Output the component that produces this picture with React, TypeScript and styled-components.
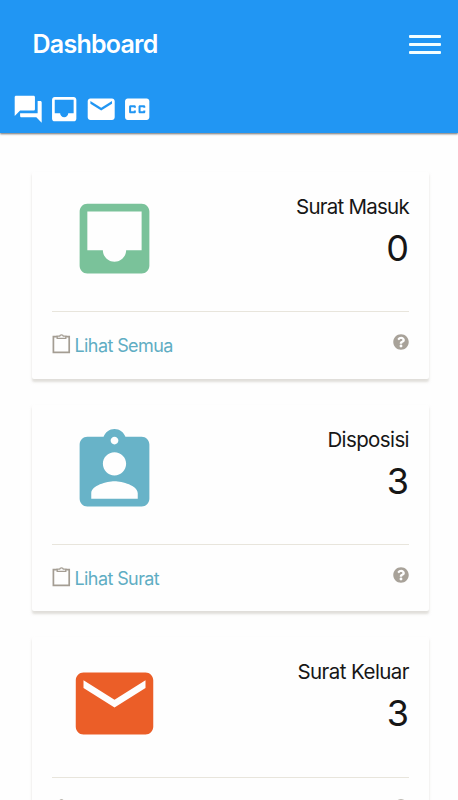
import React from "react";
import styled, { createGlobalStyle } from "styled-components";
import { FaQuestionCircle } from "react-icons/fa";

const GlobalStyle = createGlobalStyle`
  * { box-sizing: border-box; }
  html, body { margin: 0; background: #fefefe; }
  body { font-family: Inter, "Open Sans", sans-serif; }
`;

const icons = {
  forum:
    "M21 6h-2v9H6v2c0 .55.45 1 1 1h11l4 4V7c0-.55-.45-1-1-1zm-4 6V3c0-.55-.45-1-1-1H3c-.55 0-1 .45-1 1v14l4-4h10c.55 0 1-.45 1-1z",
  inbox:
    "M19 3H4.99c-1.11 0-1.98.89-1.98 2L3 19c0 1.1.88 2 1.99 2H19c1.1 0 2-.9 2-2V5c0-1.11-.9-2-2-2zm0 12h-4c0 1.66-1.35 3-3 3s-3-1.34-3-3H4.99V5H19v10z",
  mail:
    "M20 4H4c-1.1 0-1.99.9-1.99 2L2 18c0 1.1.9 2 2 2h16c1.1 0 2-.9 2-2V6c0-1.1-.9-2-2-2zm0 4l-8 5-8-5V6l8 5 8-5v2z",
  caption:
    "M19 4H5c-1.11 0-2 .9-2 2v12c0 1.1.89 2 2 2h14c1.1 0 2-.9 2-2V6c0-1.1-.9-2-2-2zm-8 7H9.5v-.5h-2v3h2V13H11v1c0 .55-.45 1-1 1H7c-.55 0-1-.45-1-1v-4c0-.55.45-1 1-1h3c.55 0 1 .45 1 1v1zm7 0h-1.5v-.5h-2v3h2V13H18v1c0 .55-.45 1-1 1h-3c-.55 0-1-.45-1-1v-4c0-.55.45-1 1-1h3c.55 0 1 .45 1 1v1z",
  person:
    "M19 3h-4.18C14.4 1.84 13.3 1 12 1c-1.3 0-2.4.84-2.82 2H5c-1.1 0-2 .9-2 2v14c0 1.1.9 2 2 2h14c1.1 0 2-.9 2-2V5c0-1.1-.9-2-2-2zm-7 0c.55 0 1 .45 1 1s-.45 1-1 1-1-.45-1-1 .45-1 1-1zm0 4c1.66 0 3 1.34 3 3s-1.34 3-3 3-3-1.34-3-3 1.34-3 3-3zm6 12H6v-1.4c0-2 4-3.1 6-3.1s6 1.1 6 3.1V19z",
};

type IconName = keyof typeof icons;

const Svg = styled.svg<{ $size: number }>`
  display: block;
  flex: none;
  width: ${(p) => p.$size}px;
  height: ${(p) => p.$size}px;
  fill: currentColor;
`;

const Icon = ({ name, size }: { name: IconName; size: number }) => (
  <Svg viewBox="0 0 24 24" $size={size}>
    <path d={icons[name]} />
  </Svg>
);

const Screen = styled.div`
  height: 100vh;
  overflow: hidden;
`;

const Header = styled.header`
  height: 133px;
  background: #2196f3;
  color: #fff;
  box-shadow: 0 1px 2px rgba(60, 60, 60, 0.75);
`;

const TitleRow = styled.div`
  display: flex;
  align-items: center;
  justify-content: space-between;
  height: 88px;
  padding: 0 17.5px 0 32.5px;
`;

const Title = styled.h1`
  margin: 0;
  font-size: 25px;
  line-height: 30px;
  font-weight: 600;
  letter-spacing: -0.75px;
`;

const MenuButton = styled.button`
  display: flex;
  flex-direction: column;
  gap: 5px;
  width: 32px;
  padding: 0;
  border: 0;
  background: none;
`;

const MenuBar = styled.span`
  height: 3px;
  border-radius: 1px;
  background: #f4ffff;
`;

const Shortcuts = styled.nav`
  display: flex;
  gap: 4px;
  padding: 4.7px 0 0 12px;
`;

const CardList = styled.main`
  display: flex;
  flex-direction: column;
  gap: 26px;
  padding: 39px 29px 0 32px;
`;

const Card = styled.section`
  height: 206.7px;
  padding: 20px 20px 0;
  border-radius: 2px;
  background: #fefefe;
  box-shadow: 0 2.5px 2.5px rgba(204, 200, 193, 0.6);
`;

const CardBody = styled.div`
  display: flex;
  justify-content: space-between;
  height: 119.3px;
  padding-left: 16.2px;
`;

const Emblem = styled.div<{ $color: string }>`
  color: ${(p) => p.$color};
`;

const Stat = styled.div`
  display: flex;
  flex-direction: column;
  align-items: flex-end;
  padding-top: 1px;
  color: #161616;
`;

const Label = styled.div<{ $spacing: number }>`
  font-size: 20.5px;
  line-height: 28px;
  letter-spacing: ${(p) => p.$spacing}px;
`;

const Count = styled.div`
  margin-top: 4px;
  font-size: 36px;
  line-height: 46px;
`;

const CardFooter = styled.footer`
  display: flex;
  align-items: flex-start;
  justify-content: space-between;
  padding-top: 21.7px;
  border-top: 1.3px solid #e8e5dc;
`;

const Link = styled.a<{ $spacing: number }>`
  display: flex;
  align-items: flex-start;
  gap: 3.5px;
  color: #5fadc3;
  font-size: 18px;
  line-height: 24px;
  letter-spacing: ${(p) => p.$spacing}px;
`;

const ClipboardSvg = styled.svg`
  display: block;
  width: 19px;
  height: 21px;
  fill: none;
  stroke: #a49d93;
  stroke-width: 1.7;
`;

const Clipboard = () => (
  <ClipboardSvg viewBox="0 0 19 21">
    <path d="M5 2.7H1.4V18.4H17.2V2.7H14" />
    <path d="M5.2 2.2H7.7Q7.9 0.9 9.5 0.9Q11.1 0.9 11.3 2.2H13.8V4.4H5.2Z" strokeWidth="1.3" />
  </ClipboardSvg>
);

const Help = styled.span`
  display: flex;
  color: #a8a299;
  font-size: 16px;
`;

const cards: {
  icon: IconName;
  color: string;
  label: string;
  labelSpacing: number;
  count: number;
  link: string;
  linkSpacing: number;
}[] = [
  { icon: "inbox", color: "#7ac29a", label: "Surat Masuk", labelSpacing: -0.75, count: 0, link: "Lihat Semua", linkSpacing: -0.6 },
  { icon: "person", color: "#68b3c8", label: "Disposisi", labelSpacing: -0.6, count: 3, link: "Lihat Surat", linkSpacing: -0.6 },
  { icon: "mail", color: "#eb5e28", label: "Surat Keluar", labelSpacing: -0.55, count: 3, link: "Lihat Surat", linkSpacing: -0.6 },
];

const shortcuts: IconName[] = ["forum", "inbox", "mail", "caption"];

export default function App() {
  return (
    <Screen>
      <GlobalStyle />
      <Header>
        <TitleRow>
          <Title>Dashboard</Title>
          <MenuButton aria-label="Menu">
            <MenuBar />
            <MenuBar />
            <MenuBar />
          </MenuButton>
        </TitleRow>
        <Shortcuts>
          {shortcuts.map((name) => (
            <Icon key={name} name={name} size={32.4} />
          ))}
        </Shortcuts>
      </Header>
      <CardList>
        {cards.map((card) => (
          <Card key={card.label}>
            <CardBody>
              <Emblem $color={card.color}>
                <Icon name={card.icon} size={93} />
              </Emblem>
              <Stat>
                <Label $spacing={card.labelSpacing}>{card.label}</Label>
                <Count>{card.count}</Count>
              </Stat>
            </CardBody>
            <CardFooter>
              <Link $spacing={card.linkSpacing}>
                <Clipboard />
                {card.link}
              </Link>
              <Help>
                <FaQuestionCircle />
              </Help>
            </CardFooter>
          </Card>
        ))}
      </CardList>
    </Screen>
  );
}
